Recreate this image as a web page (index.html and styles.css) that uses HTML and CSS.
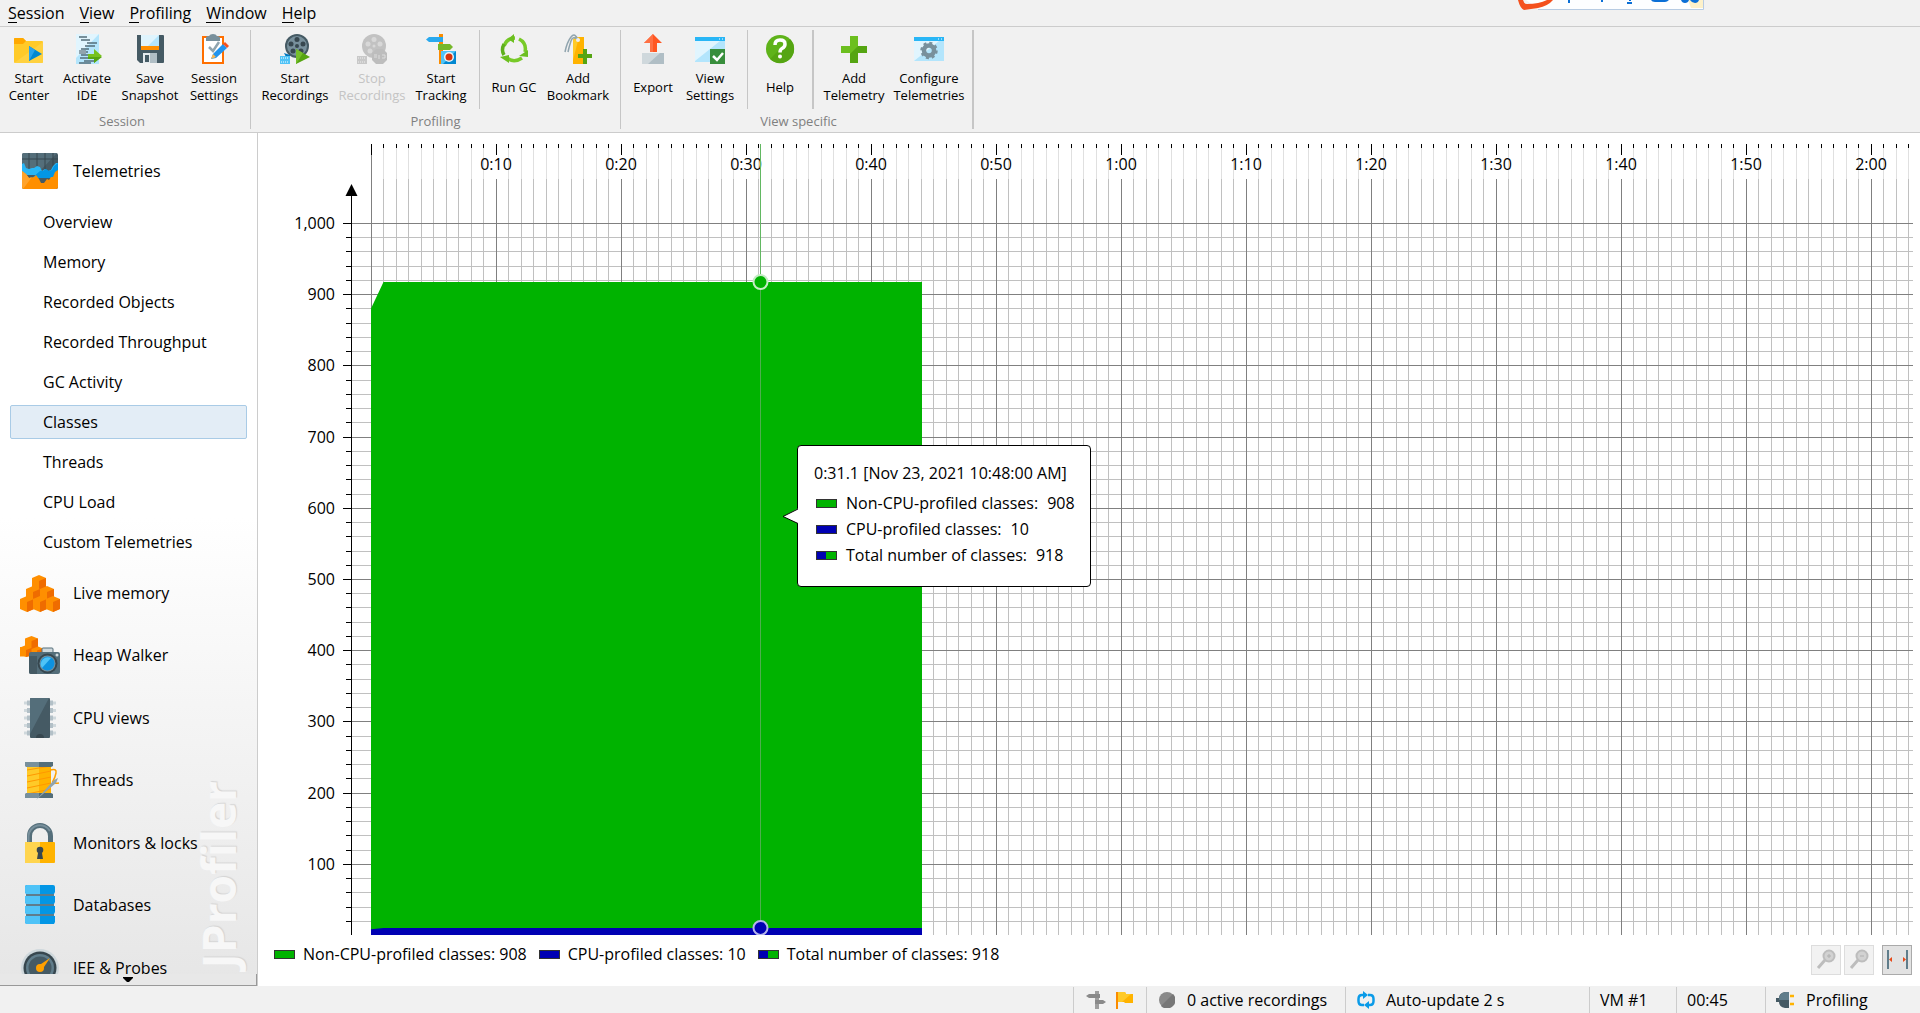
FILE: index.html
```html
<!DOCTYPE html>
<html lang="en">
<head>
<meta charset="utf-8">
<title>JProfiler</title>
<link rel="stylesheet" href="styles.css">
</head>
<body>
<header class="menubar">
  <nav class="menus">
    <button><u>S</u>ession</button>
    <button><u>V</u>iew</button>
    <button><u>P</u>rofiling</button>
    <button><u>W</u>indow</button>
    <button><u>H</u>elp</button>
  </nav>
  <svg class="ime" width="190" height="10" viewBox="0 0 190 10" aria-hidden="true">
    <path d="M8 0H186V9H20z" fill="#fdfeff"/><path d="M170 0h15v8h-12z" fill="#fdf1c9"/>
    <path d="M20 9.500H185.500V0" fill="none" stroke="#b7cbe2"/>
    <path d="M0 0h5q1 4 4 4Q21 4 29 0h6Q30 6 20 8L6 10Q2 8 0 0z" fill="#f4511e"/>
    <path d="M51 0v3M83 1h2M109 3h5M111 0h2" stroke="#0b6fd6" stroke-width="2"/>
    <path d="M133 0h18q-2 2-4 2h-10q-3 0-4-2zM163 0h8q-1 3-4 3t-4-3zM172 0h9q-1 3-4 3t-5-3z" fill="#0b6fd6"/>
  </svg>
</header>

<div class="toolbar">
  <section class="group">
    <div class="tools">
      <button class="tool w58"><svg viewBox="0 0 30 30"><path d="M0 6V5q0-1 1-1h8l3 3h16q1 0 1 1v20q0 1-1 1H1q-1 0-1-1z" fill="#ffca28"/><path d="M0 5q0-1 1-1h8l3 3-3 3H0z" fill="#ffa800"/><path d="M0 29L29 8v20q0 1-1 1z" fill="#ffd54f" opacity=".6"/><path d="M15 12v15l13-7z" fill="#0288d1"/><path d="M15 12v15l6-11z" fill="#29a3ea"/></svg><span>Start<br>Center</span></button>
      <button class="tool w58"><svg viewBox="0 0 30 30"><path d="M4 0h23v30H4z" fill="#b3e5fc"/><path d="M4 0h23L4 24z" fill="#e1f5fe"/><path d="M7 3h8M9 6h9M15 9h10M13 12h10M9 15h8M7 18h9M9 21h8M8 24h10M12 27h10M7 29h12" stroke="#546e7a" stroke-width="1.500"/><path d="M7 16h7v4H7z" fill="#90a4ae"/><path d="M16 20h6v-5l8 7-8 7v-4h-6z" fill="#76c21e"/><path d="M16 23h14l-8 6v-4h-6z" fill="#55a512"/></svg><span>Activate<br>IDE</span></button>
      <button class="tool w68"><svg viewBox="0 0 30 30"><path d="M2 1h26q1 0 1 1v26q0 1-1 1H5l-3-3z" fill="#455a64"/><path d="M6 1h18v12H6z" fill="#b3e5fc"/><path d="M6 1h18L12 13H6z" fill="#dff4fd"/><path d="M6 12h18v4H6z" fill="#ff8f00"/><path d="M8 19h14v10H8z" fill="#b0bec5"/><path d="M8 19h7v10H8z" fill="#e4eaed"/><path d="M10 21h4v7h-4z" fill="#455a64"/></svg><span>Save<br>Snapshot</span></button>
      <button class="tool w60"><svg viewBox="0 0 30 30"><path d="M4 3h20v26H4z" fill="#fff" stroke="#ff6f00" stroke-width="2"/><path d="M7 3q1-1 3-1 1-2 4-2t4 2q2 0 3 1v4H7z" fill="#78909c"/><path d="M10 13l4 4 6-9" fill="none" stroke="#90a4ae" stroke-width="2.500"/><path d="M12 25l2-5L24 10l4 4-11 10z" fill="#2094ee"/><path d="M12 25l2-5 3 3z" fill="#ffb74d"/><path d="M24 10l2-2 4 4-2 2z" fill="#f4511e"/></svg><span>Session<br>Settings</span></button>
    </div>
    <h2>Session</h2>
  </section>
  <section class="group">
    <div class="tools">
      <button class="tool w78"><svg viewBox="0 0 30 30"><circle cx="17" cy="12" r="12" fill="#455a64"/><circle cx="17" cy="12" r="10" fill="#78909c"/><g fill="#37474f"><circle cx="17" cy="12" r="2"/><circle cx="17" cy="5.500" r="2.500"/><circle cx="11" cy="10" r="2.500"/><circle cx="23" cy="10" r="2.500"/><circle cx="13" cy="17" r="2.500"/><circle cx="21" cy="17" r="2.500"/></g><path d="M4 19l2 4H0v7h10V21z" fill="#0277bd"/><path d="M0 22h10v8H0z" fill="#4fc3f7"/><path d="M1 24h8M1 28h8" stroke="#fff" stroke-dasharray="1 1"/><path d="M16 15v15l14-7z" fill="#56a512"/><path d="M16 15v15l7-11z" fill="#76bf2b"/></svg><span>Start<br>Recordings</span></button>
      <button class="tool w76" disabled><svg viewBox="0 0 30 30"><circle cx="17" cy="12" r="12" fill="#c2c2c2"/><g fill="#d8d8d8"><circle cx="17" cy="12" r="1.500"/><circle cx="17" cy="5.500" r="2.500"/><circle cx="11" cy="10" r="2.500"/><circle cx="23" cy="10" r="2.500"/><circle cx="13" cy="17" r="2.500"/></g><path d="M0 22h10v8H0z" fill="#c8c8c8"/><path d="M1 24h8M1 28h8" stroke="#eee" stroke-dasharray="1 1"/><path d="M19 15h7l4 4v7l-4 4h-7l-4-4v-7z" fill="#bdbdbd"/><path d="M17 21h3M17 23h3M22 21v4M25 21h3v3h-3" fill="none" stroke="#ddd"/></svg><span>Stop<br>Recordings</span></button>
      <button class="tool w62"><svg viewBox="0 0 30 30"><path d="M13 0h4v30h-4z" fill="#fb8c00"/><path d="M3 3h14v5H3L0 5.500z" fill="#29a9ee"/><path d="M12 10h12l3 3-3 3H12z" fill="#76b82a"/><path d="M15 17h15v13H15z" fill="#4fc3f7"/><path d="M30 17v13H17z" fill="#0288d1"/><circle cx="23" cy="23" r="5" fill="#e8f3f8"/><circle cx="23" cy="23" r="3.500" fill="#d5340c"/></svg><span>Start<br>Tracking</span></button>
      <i class="rule"></i>
      <button class="tool w54"><svg viewBox="0 0 30 30"><g fill="none" stroke="#78ca28" stroke-width="3.500"><path d="M5 12q3-8 11-8"/><path d="M20 5q8 4 6 13"/><path d="M23 24q-9 6-16-1"/><path d="M5 21q-3-5 0-11" stroke="#5fb01c"/></g><g fill="#6cbf20"><path d="M15 0v9l-6-4zM29 16v7l-9-1zM1 23l9-2v8z"/></g></svg><span>Run GC</span></button>
      <button class="tool w74"><svg viewBox="0 0 30 30"><path d="M12 3h9v27H10V6z" fill="#ffb300"/><path d="M12 3h4L10 26V6z" fill="#ffca28"/><path d="M15 6Q12-2 8 3T2 18M15 6Q10 1 8 7T5 18" fill="none" stroke="#90a4ae" stroke-width="1.500"/><circle cx="15" cy="6" r="2" fill="#eceff1"/><path d="M20 15h4v5h5v4h-5v6h-4v-6h-5v-4h5z" fill="#55a512"/></svg><span>Add<br>Bookmark</span></button>
    </div>
    <h2>Profiling</h2>
  </section>
  <section class="group">
    <div class="tools">
      <button class="tool w54"><svg viewBox="0 0 30 30"><path d="M15 0l9 9h-5v9h-7V9H6z" fill="#ff5722"/><path d="M15 0v18h-3V9H6z" fill="#ff7043"/><path d="M4 19h22v11H4z" fill="#b0bec5"/><path d="M4 19h18L10 30H4z" fill="#cfd8dc"/></svg><span>Export</span></button>
      <button class="tool w60"><svg viewBox="0 0 30 30"><path d="M0 3h30v25H0z" fill="#b3e5fc"/><path d="M0 3h30L0 27z" fill="#e1f5fe"/><path d="M0 3h30v4H0z" fill="#29b6f6"/><path d="M24 5h1M27 5h1" stroke="#fff"/><path d="M15 15h15v15H15z" fill="#388e3c"/><path d="M18 22l4 4 6-7" fill="none" stroke="#fff" stroke-width="2.500"/></svg><span>View<br>Settings</span></button>
      <i class="rule"></i>
      <button class="tool w50"><svg viewBox="0 0 30 30"><circle cx="15" cy="15" r="14" fill="#5fb31a"/><path d="M5 25A14 14 0 0 0 25 5z" fill="#55a512"/><path d="M10 11q0-5 5-5t5 4q0 3-3 4.500-2 1-2 4" fill="none" stroke="#fff" stroke-width="3.500"/><circle cx="15" cy="22.500" r="2" fill="#fff"/></svg><span>Help</span></button>
      <i class="rule thick"></i>
      <button class="tool w66"><svg viewBox="0 0 30 30"><path d="M11 2h8v10h9v7h-9v10h-8V19H2v-7h9z" fill="#6cbf1f"/><path d="M28 12v7h-9v10h-8v-9l8-8z" fill="#55a512"/></svg><span>Add<br>Telemetry</span></button>
      <button class="tool w84"><svg viewBox="0 0 30 30"><path d="M0 3h30v24H0z" fill="#b3e5fc"/><path d="M0 3h30L0 27z" fill="#e1f5fe"/><path d="M0 3h30v4H0z" fill="#29b6f6"/><path d="M24 5h1M27 5h1" stroke="#fff"/><circle cx="15" cy="16.500" r="5" fill="none" stroke="#78909c" stroke-width="4.500"/><circle cx="15" cy="16.500" r="7.500" fill="none" stroke="#78909c" stroke-width="2.500" stroke-dasharray="3 2.900"/></svg><span>Configure<br>Telemetries</span></button>
    </div>
    <h2>View specific</h2>
  </section>
</div>

<main class="workspace">
  <aside class="sidebar">
    <div class="watermark" aria-hidden="true">JProfiler</div>
    <nav class="views">
      <a class="view" href="#"><svg viewBox="0 0 40 40"><rect x="2" y="2" width="36" height="36" rx="2" fill="#455a64"/><path d="M2 4q0-2 2-2h33L20 20H2z" fill="#546e7a"/><path d="M9 2v20M17 2v20M25 2v20M33 2v20M2 8h36" stroke="#37474f"/><path d="M2 13l2-1 2 5 3 1 3-1 2 0 3-2 3 1 2 4 3-2 3 2 3-1 2-4 3-3 2 0v12H2z" fill="#29b6f6"/><path d="M20 20l3 0 3-2 3 2 3-1 2-4 4-3v15H12z" fill="#0396e5"/><path d="M2 20l4 3 3 4 5-1 2-2 3 4 2 4 3 0 3-4 2 1 2-3 2 0 2-5 3-2v17q0 2-2 2H4q-2 0-2-2z" fill="#ff8f00"/><path d="M2 20l4 3 3 4 3-1L3 38l-1-2z" fill="#ffa32b"/></svg>Telemetries</a>
      <div class="subviews">
        <a href="#">Overview</a>
        <a href="#">Memory</a>
        <a href="#">Recorded Objects</a>
        <a href="#">Recorded Throughput</a>
        <a href="#">GC Activity</a>
        <a href="#" class="current" aria-current="page">Classes</a>
        <a href="#">Threads</a>
        <a href="#">CPU Load</a>
        <a href="#">Custom Telemetries</a>
      </div>
      <a class="view" href="#"><svg viewBox="0 0 40 40"><defs><g id="cube"><path d="M0 3L7 0l7 3v10l-7 3-7-3z" fill="#ff8f00"/><path d="M14 3v10l-7 3V6z" fill="#ef6c00"/></g></defs><use href="#cube" x="12" y="2"/><use href="#cube" x="6" y="13"/><use href="#cube" x="20" y="13"/><use href="#cube" x="0" y="23"/><use href="#cube" x="13" y="23"/><use href="#cube" x="26" y="23"/></svg>Live memory</a>
      <a class="view" href="#"><svg viewBox="0 0 40 40"><path d="M5 3.500L11.500 1 18 3.500v8l5 2v8H0v-9l5-2z" fill="#ff8f00"/><path d="M0 12v7l6 3 5-2v-8z" fill="#ff8f00"/><path d="M18 3.500v8L11.500 14V6zM11.500 13v7L6 22v-7zM23 13.500v5h-6v-3z" fill="#ef6c00"/><path d="M22 17v-3q0-1 1-1h9q1 0 1 1v3" fill="#cfd8dc" stroke="#546e7a"/><rect x="9" y="17" width="31" height="22" rx="2" fill="#546e7a"/><path d="M9 21h8v18h-6q-2 0-2-2z" fill="#455a64"/><circle cx="27.500" cy="28.500" r="10" fill="#37474f"/><circle cx="27.500" cy="28.500" r="8" fill="#78909c"/><circle cx="27.500" cy="28.500" r="7" fill="#0d92e0"/><path d="M22 33a7 7 0 0 1 9-10z" fill="#4fc3f7"/><circle cx="37" cy="20" r="1.500" fill="#cfd8dc"/></svg>Heap Walker</a>
      <a class="view" href="#"><svg viewBox="0 0 40 40"><path d="M4 5h6M4 12.500h6M4 20h6M4 27.500h6M4 35h6M30 5h6M30 12.500h6M30 20h6M30 27.500h6M30 35h6" stroke="#cfd8dc" stroke-width="3"/><path d="M7 5h3M7 12.500h3M7 20h3M7 27.500h3M7 35h3M30 5h3M30 12.500h3M30 20h3M30 27.500h3M30 35h3" stroke="#b3c0c7" stroke-width="5"/><rect x="10" width="20" height="40" rx="1" fill="#455a64"/><path d="M10 1q0-1 1-1h18L10 36z" fill="#546e7a"/><path d="M16 40a4 4 0 0 1 8 0z" fill="#37474f"/></svg>CPU views</a>
      <a class="view" href="#"><svg viewBox="0 0 40 40"><path d="M7 5h24v31H7z" fill="#ffb300"/><path d="M7 5h12v31H7z" fill="#ffca28"/><path d="M7 10l24-4M7 16l24-5M7 22l24-5M7 28l24-5M7 34l24-5" stroke="#ff9800"/><path d="M5 2h28v4l-2 1H7L5 6zM5 38h28v-4l-2-1H7l-2 1z" fill="#546e7a"/><path d="M5 2h14v5H7L5 6zM5 38h14v-5H7l-2 1z" fill="#78909c"/><path d="M30 10q7-2 6 3t-3 8 6 2" fill="none" stroke="#ffa000" stroke-width="1.500"/><path d="M16 40l18-20 4-2-2 5z" fill="#90a4ae"/></svg>Threads</a>
      <a class="view" href="#"><svg viewBox="0 0 40 40"><path d="M9.500 20V13a10.500 10.500 0 0 1 21 0v7" fill="none" stroke="#546e7a" stroke-width="5"/><path d="M8.500 20V13A11.500 11.500 0 0 1 30 8" fill="none" stroke="#78909c" stroke-width="2"/><rect x="5" y="19" width="30" height="21" rx="1" fill="#ffb300"/><path d="M5 19h15v21H5z" fill="#ffd54f"/><circle cx="20" cy="27" r="3.300" fill="#37474f"/><path d="M18.500 27h3L23 36h-6z" fill="#37474f"/></svg>Monitors &amp; locks</a>
      <a class="view" href="#"><svg viewBox="0 0 40 40"><path d="M6 2h28v36H6z" fill="#607d8b"/><path d="M5 2q0-2 2-2h26q2 0 2 2v5l-1 2H6L5 7zM5 11h30v6l-1 2H6l-1-2zM5 21h30v6l-1 2H6l-1-2zM5 31h30v6l-1 2H6l-1-2z" fill="#0396e5"/><path d="M5 2q0-2 2-2h13v9H6L5 7zM5 11h15v8H6l-1-2zM5 21h15v8H6l-1-2zM5 31h15v8H6l-1-2z" fill="#4fc3f7"/></svg>Databases</a>
      <a class="view" href="#"><svg viewBox="0 0 40 40"><circle cx="20" cy="20" r="19" fill="#cfd8dc"/><circle cx="20" cy="20" r="16.500" fill="#37474f"/><circle cx="20" cy="20" r="14" fill="#607d8b"/><circle cx="20" cy="20" r="11.500" fill="#455a64"/><path d="M18 18L30 10 22 22z" fill="#ffa000"/><circle cx="20" cy="20" r="4" fill="#ffa000"/></svg>JEE &amp; Probes</a>
    </nav>
    <button class="more" aria-label="More views"><svg width="10" height="6" viewBox="0 0 10 6"><path d="M0 0h10v1L6 5H4L0 1z"/></svg></button>
  </aside>

  <section class="telemetry">
    <div class="plot">
      <svg id="chart" role="img" aria-label="Classes over time"></svg>
      <div class="tooltip">
        <svg class="pointer" width="17" height="17" viewBox="0 0 17 17"><path d="M17 0L1 8.500 17 16z" fill="#fff"/><path d="M16 1L1 8.500 16 15.500" fill="none" stroke="#000"/></svg>
        <p>0:31.1 [Nov 23, 2021 10:48:00 AM]</p>
        <dl>
          <div><i class="swatch green"></i><dt>Non-CPU-profiled classes:</dt><dd>908</dd></div>
          <div><i class="swatch blue"></i><dt>CPU-profiled classes:</dt><dd>10</dd></div>
          <div><i class="swatch both"></i><dt>Total number of classes:</dt><dd>918</dd></div>
        </dl>
      </div>
    </div>
    <footer class="legend">
      <span><i class="swatch green"></i>Non-CPU-profiled classes: 908</span>
      <span><i class="swatch blue"></i>CPU-profiled classes: 10</span>
      <span><i class="swatch both"></i>Total number of classes: 918</span>
      <div class="zoom">
        <button disabled aria-label="Zoom in"><svg viewBox="0 0 28 28"><circle cx="17" cy="10" r="5.500" fill="#d2d2d2" stroke="#bdbdbd" stroke-width="2"/><path d="M13 14l-7 8" stroke="#bdbdbd" stroke-width="3"/><path d="M15 10h4M17 8v4" stroke="#b0b0b0"/></svg></button>
        <button disabled aria-label="Zoom out"><svg viewBox="0 0 28 28"><circle cx="17" cy="10" r="5.500" fill="#d2d2d2" stroke="#bdbdbd" stroke-width="2"/><path d="M13 14l-7 8" stroke="#bdbdbd" stroke-width="3"/><path d="M15 10h4" stroke="#b0b0b0"/></svg></button>
        <button class="pressed" aria-label="Fit to window"><svg viewBox="0 0 28 28"><path d="M5 4v19M24 4v19" stroke="#607d8b" stroke-width="2"/><path d="M6 13.500l3-2.500v5zM23 13.500l-3-2.500v5z" fill="#e64a19"/></svg></button>
      </div>
    </footer>
  </section>
</main>

<footer class="status">
  <div class="cell icons"><svg width="20" height="20" viewBox="0 0 20 20"><path d="M9 1h4v18H9z" fill="#9e9e9e"/><path d="M3 4h11v4H3L0 6zM9 10h8l3 2-3 2H9z" fill="#8a8a8a"/></svg><svg width="18" height="18" viewBox="0 0 18 18"><path d="M1 1v17" stroke="#fb8c00" stroke-width="2"/><path d="M2 1h7l1 2h7v9H9l-1-1H2z" fill="#ffb300"/><path d="M2 1h7l1 2h5l-9 8H2z" fill="#ffca28"/></svg></div>
  <div class="cell recordings"><svg width="16" height="16" viewBox="0 0 16 16"><circle cx="8" cy="8" r="8" fill="#8a8a8a"/><path d="M2 14A8 8 0 0 0 14 2z" fill="#777"/></svg>0 active recordings</div>
  <div class="cell update"><svg width="20" height="18" viewBox="0 0 20 18"><path d="M8 14H6q-3.500 0-3.500-4V8Q2.500 4 6 4h2M12 4h2q3.500 0 3.500 4v2q0 4-3.500 4h-2" fill="none" stroke="#0b9be8" stroke-width="2.500"/><path d="M7 0l5 4-5 4zM13 10v8l-5-4z" fill="#0b9be8"/></svg>Auto-update 2 s</div>
  <div class="cell vm">VM #1</div>
  <div class="cell time">00:45</div>
  <div class="cell mode"><svg width="20" height="16" viewBox="0 0 20 16"><path d="M13 0v16H9q-6-1-6-6H0V6h3q0-5 6-6z" fill="#455a64"/><path d="M9 0q-6 1-6 8h10V0z" fill="#607d8b"/><path d="M14 4h4M14 12h4" stroke="#ffb300" stroke-width="2.500"/></svg>Profiling</div>
</footer>
<script src="chart.js"></script>
</body>
</html>
```
FILE: styles.css
```css
* { box-sizing: border-box; }

body {
  margin: 0;
  height: 100vh;
  display: flex;
  flex-direction: column;
  overflow: hidden;
  background: #f1f1f1;
  color: #000;
  font: 16px/20px "Open Sans", "Noto Sans", sans-serif;
}

button {
  font: inherit;
  color: inherit;
  padding: 0;
  border: 0;
  background: none;
}

a { color: inherit; text-decoration: none; }

/* Menu bar */
.menubar {
  position: relative;
  flex: none;
  height: 27px;
  border-bottom: 1px solid #ccc;
}
.menus { display: flex; gap: 15px; padding: 3px 8px; }
.menus u {
  display: inline-block;
  line-height: 17px;
  border-bottom: 1px solid #000;
  text-decoration: none;
}
.ime { position: absolute; top: 0; right: 212px; }

/* Toolbar */
.toolbar {
  flex: none;
  display: flex;
  height: 106px;
  padding: 3px 0;
  border-bottom: 1px solid #ccc;
}
.group {
  display: flex;
  flex-direction: column;
  justify-content: space-between;
  padding: 0 5px;
  border-right: 1px solid #c6c6c6;
}
.group:first-child { padding: 0 6px 0 0; }
.group:last-child { border-right-width: 2px; padding-right: 1px; }
.group h2 {
  margin: 0;
  font-size: 13px;
  line-height: 16px;
  font-weight: 400;
  text-align: center;
  color: #808080;
}
.tools { display: flex; height: 79px; }
.tool {
  display: flex;
  flex-direction: column;
  align-items: center;
  padding-top: 4px;
  font-size: 13px;
  line-height: 17px;
  white-space: nowrap;
}
.tool svg { flex: none; width: 30px; height: 30px; }
.tool span { display: flex; align-items: center; height: 34px; margin-top: 6px; }
.tool:disabled { color: #c4c4c4; }
.w50 { width: 50px; }
.w54 { width: 54px; }
.w58 { width: 58px; }
.w60 { width: 60px; }
.w62 { width: 62px; }
.w66 { width: 66px; }
.w68 { width: 68px; }
.w74 { width: 74px; }
.w76 { width: 76px; }
.w78 { width: 78px; }
.w84 { width: 84px; }
.rule { width: 1px; margin: 0 7px; background: #c6c6c6; }
.rule.thick { width: 2px; }

/* Sidebar */
.workspace { flex: 1; min-height: 0; display: flex; }
.sidebar {
  position: relative;
  flex: none;
  width: 258px;
  display: flex;
  flex-direction: column;
  border-right: 1px solid #ccc;
  background: linear-gradient(#fff 45%, #e6e6e6);
}
.views { position: relative; flex: 1; min-height: 0; overflow: hidden; padding-top: 6px; }
.view { display: flex; align-items: center; gap: 13px; height: 62px; padding-left: 20px; }
.view:nth-child(odd) { height: 63px; }
.view svg { width: 40px; height: 40px; }
.subviews { display: grid; gap: 6px; padding: 3px 10px 2px; }
.subviews a {
  display: flex;
  align-items: center;
  height: 34px;
  padding-left: 32px;
  border: 1px solid transparent;
  border-radius: 2px;
}
.subviews .current { border-color: #a9cbe6; background: #e3edf6; }
.watermark {
  position: absolute;
  right: 11px;
  bottom: 18px;
  writing-mode: vertical-rl;
  transform: rotate(180deg);
  font-size: 46px;
  line-height: 56px;
  font-weight: 700;
  color: #f7f7f7;
  text-shadow: 1px 1px 1px #d4d4d4;
}
.more {
  position: relative;
  flex: none;
  display: flex;
  align-items: center;
  justify-content: center;
  height: 12px;
  border-right: 1px solid #999;
  border-bottom: 1px solid #999;
  background: #e8e8e8;
}

/* Telemetry graph */
.telemetry { flex: 1; min-width: 0; display: flex; flex-direction: column; background: #fff; }
.plot { position: relative; flex: 1; min-height: 0; }
#chart { display: block; width: 100%; height: 100%; }
.tooltip {
  position: absolute;
  left: 539px;
  top: 312px;
  padding: 17px 15px 21px 16px;
  border: 1px solid #000;
  border-radius: 4px;
  background: #fff;
}
.tooltip p { margin: 0 0 10px; }
.tooltip dl { display: grid; gap: 6px; margin: 0; }
.tooltip dl div { display: flex; align-items: center; padding-left: 2px; }
.tooltip dt { margin-left: 9px; }
.tooltip dd { margin: 0 0 0 9px; }
.pointer { position: absolute; left: -16px; top: 62px; }
.swatch { flex: none; width: 21px; height: 9px; border: 1px solid #333; }
.green { background: #00b300; }
.blue { background: #0000b3; }
.both { background: linear-gradient(90deg, #0000b3 50%, #00b300 50%); }

.legend {
  flex: none;
  display: flex;
  gap: 12px;
  height: 51px;
  padding: 9px 8px 0 16px;
}
.legend span { display: flex; align-items: center; gap: 8px; height: 20px; }
.zoom { display: flex; gap: 3px; margin: 1px 0 0 auto; }
.zoom button { width: 30px; height: 30px; border: 1px solid #ddd; background: #f2f2f2; }
.zoom svg { display: block; width: 28px; height: 28px; }
.zoom .pressed { margin-left: 5px; border-color: #aaa; background: #e2e2e2; }

/* Status bar */
.status { flex: none; display: flex; justify-content: flex-end; height: 27px; padding-top: 1px; }
.cell { display: flex; align-items: center; gap: 10px; padding-left: 10px; border-left: 1px solid #ccc; white-space: nowrap; }
.icons { width: 73px; padding-left: 12px; }
.recordings { width: 199px; gap: 12px; padding-left: 12px; }
.update { width: 244px; }
.vm { width: 87px; }
.time { width: 89px; }
.mode { width: 155px; }
```
FILE: chart.js
```js
const NS = "http://www.w3.org/2000/svg";
const chart = document.getElementById("chart");

function add(name, attrs, text) {
  const el = document.createElementNS(NS, name);
  for (const key in attrs) el.setAttribute(key, attrs[key]);
  if (text) el.textContent = text;
  chart.appendChild(el);
}

function vline(x, top, bottom, color) {
  add("rect", { x, y: top, width: 1, height: bottom - top, fill: color });
}

function hline(y, left, right, color) {
  add("rect", { x: left, y, width: right - left, height: 1, fill: color });
}

function draw() {
  chart.replaceChildren();
  const width = chart.clientWidth;
  const bottom = chart.clientHeight;
  const left = 113;
  const right = width - 7;
  const top = 90;
  const axis = 93;
  const second = 12.5;
  const yOf = v => bottom - v * (bottom - top) / 1000;
  const xOf = s => left + s * second;

  for (let s = 0; xOf(s) < right; s++) {
    const x = Math.floor(xOf(s));
    if (s % 10) {
      vline(x, 15, 46, "#e0e0e0");
      vline(x, 46, bottom, "#c0c0c0");
      vline(x, 11, 15, "#000");
    }
  }
  for (let v = 20; v <= 1000; v += 20) {
    const y = Math.round(yOf(v));
    const major = v % 100 === 0;
    hline(y, axis, right, major ? "#808080" : "#c0c0c0");
    hline(y, axis - (major ? 8 : 5), axis, "#000");
    if (major) {
      add("text", { x: 77, y: y + 6, "text-anchor": "end" }, v.toLocaleString("en-US"));
    }
  }
  for (let s = 0; xOf(s) < right; s += 10) {
    const x = Math.floor(xOf(s));
    vline(x, s ? 46 : 11, bottom, "#808080");
    vline(x, 11, 22, "#000");
    if (s) {
      const label = Math.floor(s / 60) + ":" + String(s % 60).padStart(2, "0");
      add("text", { x, y: 37, "text-anchor": "middle" }, label);
    }
  }

  vline(axis, 60, bottom, "#000");
  add("path", { d: `M${axis + 0.5} 51l6 12h-12z` });

  const end = Math.ceil(xOf(44)) + 1;
  const yTop = Math.ceil(yOf(918));
  const area = (from, to) => `M${left} ${bottom}V${yOf(from)}L${xOf(1)} ${Math.ceil(yOf(to))}H${end}V${bottom}z`;
  add("path", { d: area(880, 918), fill: "#00b300" });
  add("path", { d: area(8, 10), fill: "#0000b3" });

  const cursor = Math.floor(xOf(31.1)) + 1;
  vline(cursor, 11, yTop, "#62b862");
  vline(cursor, yTop, yOf(10), "#4fae4f");
  add("circle", { cx: cursor + 0.5, cy: yTop, r: 7, fill: "#00b300", stroke: "#c4ecc4", "stroke-width": 2 });
  add("circle", { cx: cursor + 0.5, cy: yOf(10), r: 7, fill: "#0000b3", stroke: "#b4b4ea", "stroke-width": 2 });
}

draw();
window.addEventListener("resize", draw);
```
